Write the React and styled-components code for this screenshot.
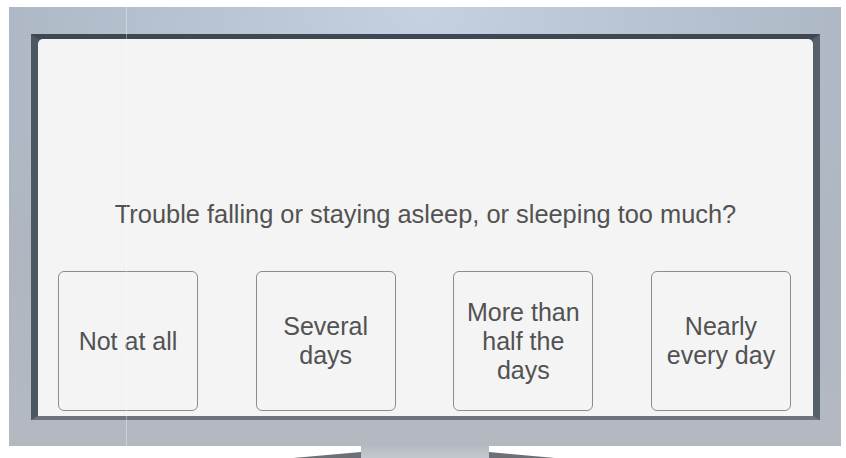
import React from 'react';
import styled, { createGlobalStyle } from 'styled-components';

const GlobalStyle = createGlobalStyle`
  html, body {
    margin: 0;
    padding: 0;
    background: #ffffff;
  }
  body {
    font-family: "Liberation Sans", Arial, sans-serif;
  }
`;

const Page = styled.div`
  position: relative;
  width: 846px;
  height: 458px;
  overflow: hidden;
  background: #ffffff;
  display: flex;
  flex-direction: column;
  align-items: flex-start;
  padding: 7px 0 0 9px;
  box-sizing: border-box;
`;

const Bezel = styled.div`
  width: 832px;
  height: 439px;
  box-sizing: border-box;
  padding: 27px 21px 26px 22px;
  background:
    radial-gradient(ellipse 60% 90% at 50% 0%, rgba(200, 212, 228, 0.9) 0%, rgba(200, 212, 228, 0) 100%),
    linear-gradient(180deg, #a9b3c0 0%, #b4b9c1 100%);
  display: flex;
`;

const Frame = styled.div`
  flex: 1;
  display: flex;
  border-style: solid;
  border-width: 5px 7px 4px 7px;
  border-color: #3f4852 #56606a #6e747c #4c5763;
  background: #4c5560;
`;

const Screen = styled.div`
  flex: 1;
  display: flex;
  flex-direction: column;
  justify-content: flex-end;
  background: #f4f4f4;
  border-radius: 5px 5px 0 0;
  padding-bottom: 5px;
`;

const Question = styled.div`
  text-align: center;
  font-size: 25.4px;
  color: #525252;
  margin-bottom: 42px;
`;

const Answers = styled.div`
  display: flex;
  justify-content: space-between;
  padding: 0 22px 0 20px;
`;

const Answer = styled.div`
  width: 140px;
  height: 140px;
  box-sizing: border-box;
  border: 1px solid #8c8c8c;
  border-radius: 6px;
  background: #f4f4f4;
  display: flex;
  align-items: center;
  justify-content: center;
  text-align: center;
  font-size: 25px;
  color: #525252;
  padding: 0 8px;
`;

const Glare = styled.div`
  position: absolute;
  left: 126px;
  top: 7px;
  width: 1px;
  height: 439px;
  background: rgba(255, 255, 255, 0.35);
  pointer-events: none;
`;

const Stand = styled.svg`
  display: block;
  margin-left: -9px;
`;

const answers = ['Not at all', 'Several days', 'More than half the days', 'Nearly every day'];

const App = () => {
  return (
    <>
      <GlobalStyle />
      <Page>
        <Bezel>
          <Frame>
            <Screen>
              <Question>Trouble falling or staying asleep, or sleeping too much?</Question>
              <Answers>
                {answers.map((a) => (
                  <Answer key={a}>{a}</Answer>
                ))}
              </Answers>
            </Screen>
          </Frame>
        </Bezel>
        <Stand width="846" height="12" viewBox="0 0 846 12">
          <defs>
            <linearGradient id="neck" x1="0" y1="0" x2="0" y2="1">
              <stop offset="0" stopColor="#b6bac1" />
              <stop offset="1" stopColor="#c4c8ce" />
            </linearGradient>
          </defs>
          <polygon points="293,12 361,6 361,12" fill="#6c7179" />
          <polygon points="489,6 555,12 489,12" fill="#6c7179" />
          <rect x="361" y="0" width="128" height="12" fill="url(#neck)" />
        </Stand>
        <Glare />
      </Page>
    </>
  );
};

export default App;
